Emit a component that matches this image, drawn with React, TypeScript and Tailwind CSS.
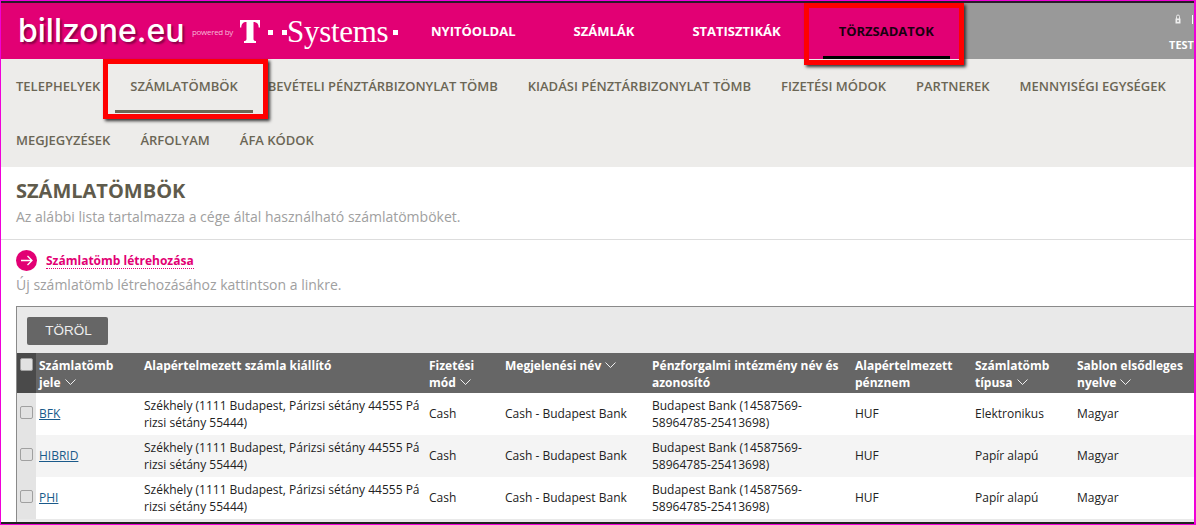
import React from "react";

const F = "font-['Open_Sans',sans-serif]";

function Chevron() {
  return (
    <svg width="11" height="6" viewBox="0 0 11 6" className="inline-block ml-1 align-[2px]" fill="none" stroke="#ffffff" strokeWidth="0.9">
      <path d="M0.5 0.5 L5.5 5.5 L10.5 0.5" />
    </svg>
  );
}

function Check() {
  return <div className="w-[13px] h-[13px] rounded-[2px] border border-[#a0a0a0] bg-[#e2e2e2]" />;
}

function Dot({ cls }: { cls: string }) {
  return <span className={`inline-block w-[5px] h-[5px] bg-white shrink-0 ${cls}`} />;
}

const widths = "grid grid-cols-[19px_108px_285px_76px_147px_203px_120px_102px_1fr]";

const sub = [
  "TELEPHELYEK",
  "SZÁMLATÖMBÖK",
  "BEVÉTELI PÉNZTÁRBIZONYLAT TÖMB",
  "KIADÁSI PÉNZTÁRBIZONYLAT TÖMB",
  "FIZETÉSI MÓDOK",
  "PARTNEREK",
  "MENNYISÉGI EGYSÉGEK",
  "MEGJEGYZÉSEK",
  "ÁRFOLYAM",
  "ÁFA KÓDOK",
];
const rows = [
  { id: "BFK", type: "Elektronikus", bg: "bg-white" },
  { id: "HIBRID", type: "Papír alapú", bg: "bg-[#f4f4f4]" },
  { id: "PHI", type: "Papír alapú", bg: "bg-white" },
];

export default function App() {
  return (
    <div className={`${F} w-[1196px] h-[525px] overflow-hidden bg-white flex flex-col border-l border-r-2 border-t border-[#f000d8] relative`}>
      <div className="h-[2px] bg-[#2a1a2a] shrink-0" />
      {/* Header */}
      <div className="h-[56px] shrink-0 bg-[#999999] flex text-white">
        <div className="w-[961px] shrink-0 bg-[#e20074] flex items-center">
          <div className="w-[414px] shrink-0 flex items-center pl-[17px]">
            <span className="w-[174px] shrink-0 font-['Inter',sans-serif] font-medium text-[32px] leading-none [text-shadow:2px_2px_2px_#8a0048]">billzone.eu</span>
            <span className="w-[39px] shrink-0 text-[8px] text-[#f6b8d6] mt-[1px] whitespace-nowrap tracking-[-0.3px]">powered by</span>
            <svg width="20" height="23" viewBox="0 0 20 23" className="ml-[9px] mt-[1px] shrink-0" fill="#ffffff">
              <path d="M0 0H20V7.5H18.7C18.7 4 17 2 13.5 2V19C13.5 20.5 14.5 21 16 21V23H4V21C5.5 21 6.5 20.5 6.5 19V2C3 2 1.3 4 1.3 7.5H0Z" />
            </svg>
            <Dot cls="ml-[8px] mt-[2px]" />
            <Dot cls="ml-[9px] mt-[2px]" />
            <span className="font-['Liberation_Serif',serif] text-[31px] leading-none whitespace-nowrap tracking-[-0.3px]">Systems</span>
            <Dot cls="ml-[5px] mt-[2px]" />
          </div>
          <nav className="flex gap-[26px] text-[13px] font-bold h-full items-center whitespace-nowrap">
            <span className="px-[16px] pt-[2px]">NYITÓOLDAL</span>
            <span className="px-[16px] pt-[2px]">SZÁMLÁK</span>
            <span className="px-[16px] pt-[2px]">STATISZTIKÁK</span>
            <span className="relative h-full flex items-center px-[16px] pt-[2px] text-[#1a0010]">
              TÖRZSADATOK
              <span className="absolute left-0 right-0 bottom-0 h-[3px] bg-black" />
              <span className="absolute -left-[19px] top-0 w-[160px] h-[62px] border-[5px] border-[#ff0000] shadow-[2px_2px_3px_#333] z-10" />
            </span>
          </nav>
        </div>
        <div className="flex-1 flex flex-col pt-[11px] text-[11px] font-bold leading-none">
          <div className="flex items-start justify-end h-[11px]">
            <svg width="6" height="10" viewBox="0 0 6 10">
              <path d="M1.5 5V2.5a1.5 1.5 0 0 1 3 0V5" fill="none" stroke="#e8e8e8" />
              <rect x="0.5" y="4.5" width="5" height="5" fill="#eeeeee" />
              <rect x="2.5" y="6" width="1" height="2" fill="#777777" />
            </svg>
            <span className="w-[1px] h-[9px] ml-[11px] mr-[1px] mt-[1px] bg-white" />
          </div>
          <span className="mt-[14px] text-right whitespace-nowrap">TEST</span>
        </div>
      </div>

      {/* Sub nav */}
      <div className="h-[108px] shrink-0 bg-[#edecea] text-[13px] font-semibold text-[#6b6655] flex flex-wrap content-start">
        {sub.map((s) => (
          <span key={s} className="relative h-[54px] flex items-center px-[15px] pt-[2px] whitespace-nowrap">
            {s}
            {s === "SZÁMLATÖMBÖK" && (
              <>
                <span className="absolute left-0 right-0 bottom-0 h-[3px] bg-[#6b6655]" />
                <span className="absolute -left-[12px] -right-[15px] top-0 h-[60px] border-[5px] border-[#ff0000] shadow-[2px_2px_3px_#333] z-10" />
              </>
            )}
          </span>
        ))}
      </div>

      {/* Title */}
      <div className="h-[73px] shrink-0 px-[15px] pt-[11px] border-b border-[#dddddd]">
        <h1 className="text-[20px] leading-[26px] font-bold text-[#5f5b4c]">SZÁMLATÖMBÖK</h1>
        <p className="text-[14px] leading-[20px] mt-[3px] text-[#a0a0a0]">Az alábbi lista tartalmazza a cége által használható számlatömböket.</p>
      </div>

      {/* Create link */}
      <div className="shrink-0 px-[15px] pt-[10px]">
        <div className="flex items-center h-[21px]">
          <span className="w-[21px] h-[21px] rounded-full bg-[#e20074] flex items-center justify-center">
            <svg width="13" height="11" viewBox="0 0 13 11" fill="none" stroke="#fff" strokeWidth="1.3">
              <path d="M1 5.5 H11.5 M7.5 1 L12 5.5 L7.5 10" />
            </svg>
          </span>
          <a className="ml-[9px] mt-[1px] text-[12px] font-bold text-[#e20074] border-b border-dotted border-[#e20074] leading-[14px]">Számlatömb létrehozása</a>
        </div>
        <p className="text-[14px] leading-[20px] mt-[4px] text-[#a0a0a0]">Új számlatömb létrehozásához kattintson a linkre.</p>
      </div>

      {/* Table */}
      <div className="ml-[15px] mt-[11px] flex-1 border-l border-t border-[#8a8a8a] bg-[#e9e9e9]">
        <div className="h-[46px] pt-[10px] pl-[10px]">
          <button className="w-[81px] h-[28px] rounded-[2px] bg-[#666666] text-[#ededed] text-[13.5px] pl-[2px] font-['Liberation_Sans',sans-serif]">TÖRÖL</button>
        </div>
        <div className={`${widths} h-[40px] bg-[#666666] text-white text-[12px] font-bold leading-[17px]`}>
          <div className="bg-[#4a4a4a] pl-[3px] pt-[5px]"><Check /></div>
          <div className="pl-[3px] pt-[4px]">Számlatömb<br />jele<Chevron /></div>
          <div className="pt-[4px]">Alapértelmezett számla kiállító</div>
          <div className="pt-[4px]">Fizetési<br />mód<Chevron /></div>
          <div className="pt-[4px]">Megjelenési név<Chevron /></div>
          <div className="pt-[4px] whitespace-nowrap">Pénzforgalmi intézmény név és<br />azonosító</div>
          <div className="pt-[4px]">Alapértelmezett<br />pénznem</div>
          <div className="pt-[4px]">Számlatömb<br />típusa<Chevron /></div>
          <div className="pt-[4px] whitespace-nowrap">Sablon elsődleges<br />nyelve<Chevron /></div>
        </div>
        {rows.map((r) => (
          <div key={r.id} className={`${widths} h-[42px] ${r.bg} text-[12px] leading-[17px] text-[#222222] items-center`}>
            <div className="bg-[#e4e4e4] h-full pl-[3px] pt-[13px]"><Check /></div>
            <div className="pl-[3px] pb-[2px]"><a className="text-[#1a5a8a] underline">{r.id}</a></div>
            <div className="whitespace-nowrap">Székhely (1111 Budapest, Párizsi sétány 44555 Pá<br />rizsi sétány 55444)</div>
            <div className="pb-[2px]">Cash</div>
            <div className="pb-[2px]">Cash - Budapest Bank</div>
            <div className="whitespace-nowrap">Budapest Bank (14587569-<br />58964785-25413698)</div>
            <div className="pb-[2px]">HUF</div>
            <div className="pb-[2px]">{r.type}</div>
            <div className="pb-[2px]">Magyar</div>
          </div>
        ))}
      </div>
      <div className="absolute left-0 right-0 bottom-[1px] h-[2px] bg-[#222222]" />
      <div className="absolute left-0 right-0 bottom-0 h-[1px] bg-[#f000d8]" />
    </div>
  );
}
